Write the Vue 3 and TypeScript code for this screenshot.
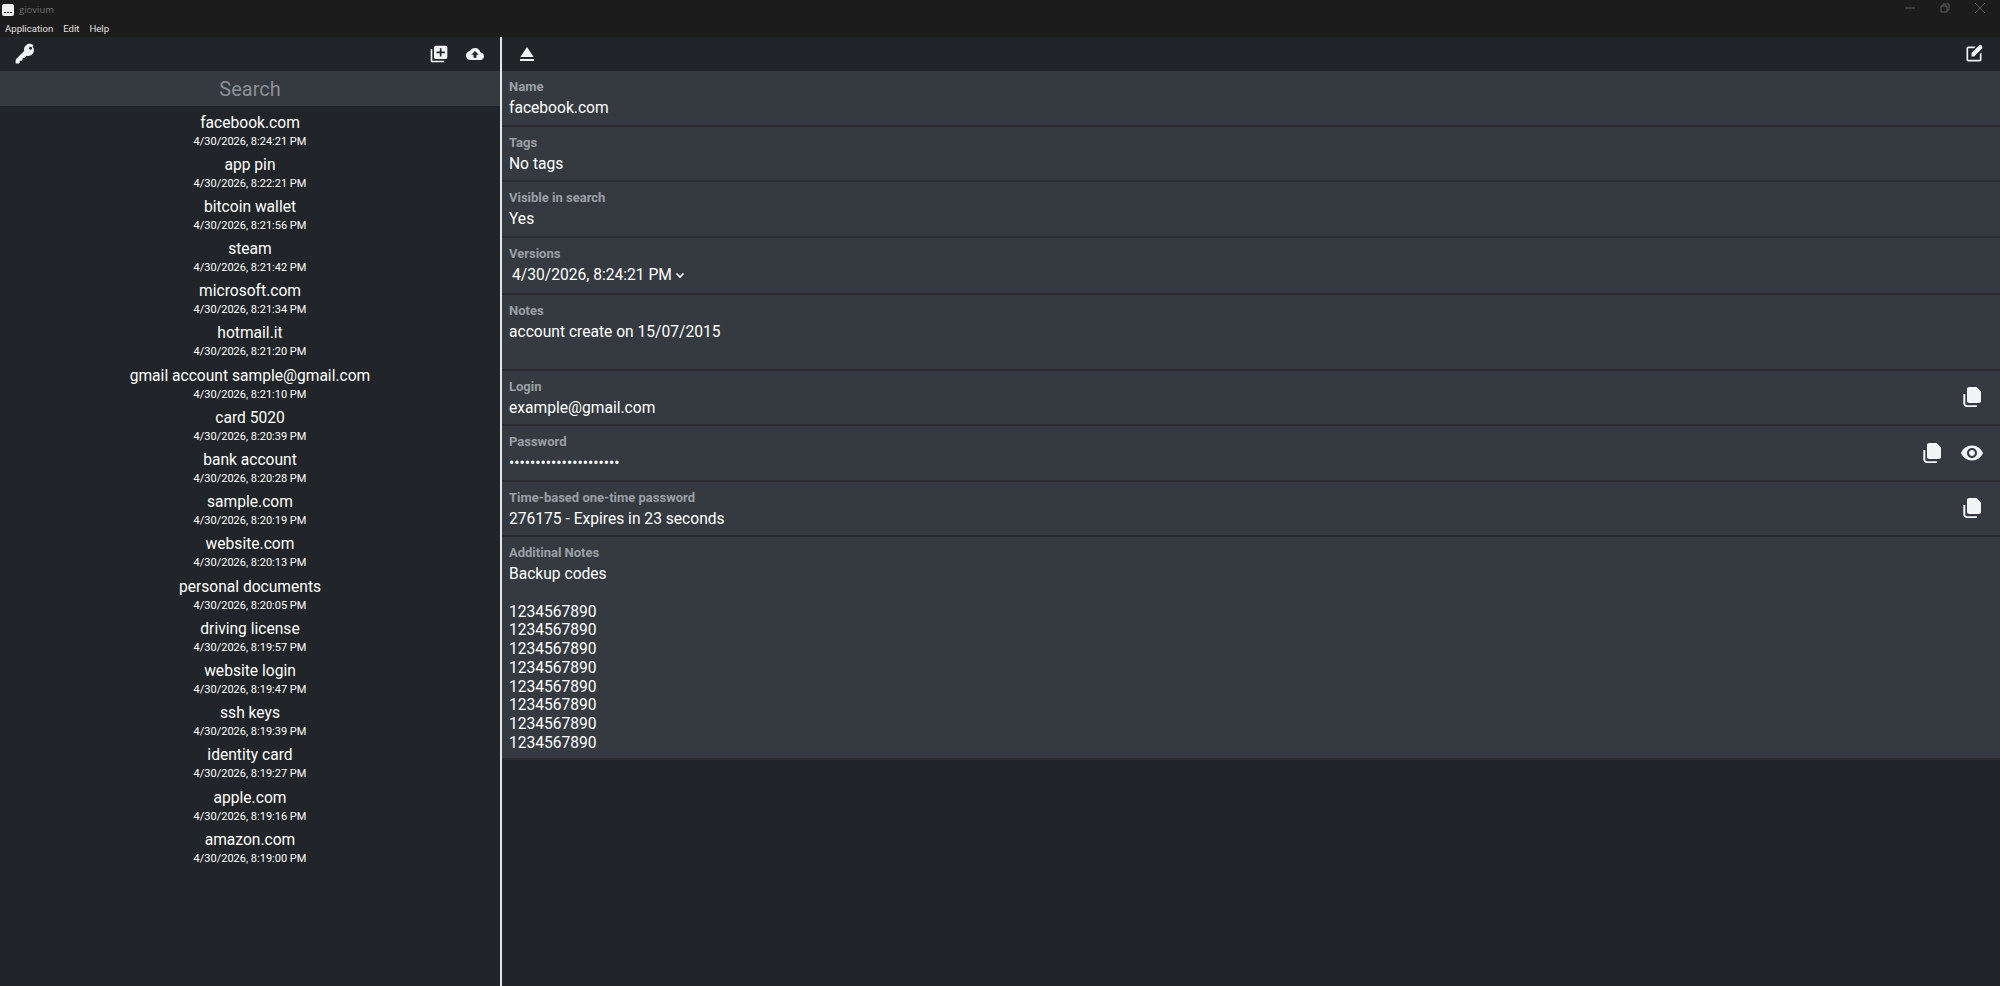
<script setup lang="ts">
interface Entry {
  name: string;
  date: string;
}

const entries: Entry[] = [
  { name: 'facebook.com', date: '4/30/2026, 8:24:21 PM' },
  { name: 'app pin', date: '4/30/2026, 8:22:21 PM' },
  { name: 'bitcoin wallet', date: '4/30/2026, 8:21:56 PM' },
  { name: 'steam', date: '4/30/2026, 8:21:42 PM' },
  { name: 'microsoft.com', date: '4/30/2026, 8:21:34 PM' },
  { name: 'hotmail.it', date: '4/30/2026, 8:21:20 PM' },
  { name: 'gmail account sample@gmail.com', date: '4/30/2026, 8:21:10 PM' },
  { name: 'card 5020', date: '4/30/2026, 8:20:39 PM' },
  { name: 'bank account', date: '4/30/2026, 8:20:28 PM' },
  { name: 'sample.com', date: '4/30/2026, 8:20:19 PM' },
  { name: 'website.com', date: '4/30/2026, 8:20:13 PM' },
  { name: 'personal documents', date: '4/30/2026, 8:20:05 PM' },
  { name: 'driving license', date: '4/30/2026, 8:19:57 PM' },
  { name: 'website login', date: '4/30/2026, 8:19:47 PM' },
  { name: 'ssh keys', date: '4/30/2026, 8:19:39 PM' },
  { name: 'identity card', date: '4/30/2026, 8:19:27 PM' },
  { name: 'apple.com', date: '4/30/2026, 8:19:16 PM' },
  { name: 'amazon.com', date: '4/30/2026, 8:19:00 PM' },
];

const backupCodes = 'Backup codes\n\n' + Array(8).fill('1234567890').join('\n');
const copyPath =
  'M9 2h7.5L21 6.5V16c0 1.1-.9 2-2 2H9c-1.1 0-2-.9-2-2V4c0-1.1.9-2 2-2zM3.3 9h2v9.5c0 1 .7 1.7 1.7 1.7h10V22H7c-2 0-3.7-1.6-3.7-3.5z';
</script>

<template>
  <div class="app">
    <header class="titlebar">
      <span class="logo"><i></i><i></i><i></i></span>
      <span class="title">giovium</span>
      <div class="window-controls">
        <svg viewBox="0 0 10 10"><path d="M0 5h10" /></svg>
        <svg viewBox="0 0 10 10"><path d="M1 3h6v6H1zM3 3V1h6v6H7" /></svg>
        <svg viewBox="0 0 10 10"><path d="M0 0l10 10M10 0L0 10" /></svg>
      </div>
    </header>
    <nav class="menubar">
      <span>Application</span>
      <span>Edit</span>
      <span>Help</span>
    </nav>

    <main class="panes">
      <aside class="sidebar">
        <div class="toolbar">
          <svg class="icon" viewBox="0 0 24 24">
            <path
              d="M20.6 3.4c-2.2-2.2-5.8-2.2-8 0-1.5 1.5-2 3.7-1.4 5.6L3.6 16.6c-.6.6-1 1.5-1 2.4v2.4h3.2l1-1v-1.6h1.7l1.2-1.2v-1.7h1.7l2.2-2.2c1.9.6 4.1.1 5.6-1.4 2.3-2.2 2.3-5.7.4-7.9zm-2 3.9c-.6.6-1.5.6-2.1 0-.6-.6-.6-1.5 0-2.1.6-.6 1.5-.6 2.1 0 .6.6.6 1.5 0 2.1z"
            />
          </svg>
          <span class="spacer"></span>
          <svg class="icon icon-sm" viewBox="0 0 24 24">
            <path
              d="M4 6H2v14c0 1.1.9 2 2 2h14v-2H4V6zm16-4H8c-1.1 0-2 .9-2 2v12c0 1.1.9 2 2 2h12c1.1 0 2-.9 2-2V4c0-1.1-.9-2-2-2zm-1 9h-4v4h-2v-4H9V9h4V5h2v4h4v2z"
            />
          </svg>
          <svg class="icon icon-xs" viewBox="0 0 24 24">
            <path
              d="M19.35 10.04C18.67 6.59 15.64 4 12 4 9.11 4 6.6 5.64 5.35 8.04 2.34 8.36 0 10.91 0 14c0 3.31 2.69 6 6 6h13c2.76 0 5-2.24 5-5 0-2.64-2.05-4.78-4.65-4.96zM14 13v4h-4v-4H7l5-5 5 5h-3z"
            />
          </svg>
        </div>
        <input class="search" type="text" placeholder="Search" />
        <ul class="entry-list">
          <li v-for="entry in entries" :key="entry.date">
            <div class="entry-name">{{ entry.name }}</div>
            <div class="entry-date">{{ entry.date }}</div>
          </li>
        </ul>
      </aside>

      <section class="detail">
        <div class="toolbar">
          <svg class="icon" viewBox="0 0 24 24"><path d="M5 17h14v2H5zm7-12L5.33 15h13.34z" /></svg>
          <span class="spacer"></span>
          <svg class="icon icon-sm" viewBox="0 0 24 24">
            <path
              d="M5 21q-.825 0-1.412-.587Q3 19.825 3 19V5q0-.825.588-1.413Q4.175 3 5 3h8.925l-2 2H5v14h14v-6.95l2-2V19q0 .825-.587 1.413Q19.825 21 19 21Zm4-6v-4.25l9.175-9.175q.3-.3.675-.45.375-.15.75-.15.4 0 .763.15.362.15.662.425L21.425 3q.275.3.425.662.15.363.15.738t-.137.737q-.138.363-.438.663L12.25 15Z"
            />
          </svg>
        </div>

        <div class="field">
          <div class="field-body">
            <label>Name</label>
            <div class="value">facebook.com</div>
          </div>
        </div>
        <div class="field">
          <div class="field-body">
            <label>Tags</label>
            <div class="value">No tags</div>
          </div>
        </div>
        <div class="field">
          <div class="field-body">
            <label>Visible in search</label>
            <div class="value">Yes</div>
          </div>
        </div>
        <div class="field field-versions">
          <div class="field-body">
            <label>Versions</label>
            <div class="value version-select">
              4/30/2026, 8:24:21 PM
              <svg viewBox="0 0 10 10"><path d="M1.5 3.5L5 7l3.5-3.5" /></svg>
            </div>
          </div>
        </div>
        <div class="field field-notes">
          <div class="field-body">
            <label>Notes</label>
            <div class="value">account create on 15/07/2015</div>
          </div>
        </div>
        <div class="field">
          <div class="field-body">
            <label>Login</label>
            <div class="value">example@gmail.com</div>
          </div>
          <svg class="icon" viewBox="0 0 24 24"><path :d="copyPath" /></svg>
        </div>
        <div class="field">
          <div class="field-body">
            <label>Password</label>
            <div class="value">•••••••••••••••••••••</div>
          </div>
          <svg class="icon" viewBox="0 0 24 24"><path :d="copyPath" /></svg>
          <svg class="icon" viewBox="0 0 24 24">
            <path
              d="M12 4.5C7 4.5 2.73 7.61 1 12c1.73 4.39 6 7.5 11 7.5s9.27-3.11 11-7.5c-1.73-4.39-6-7.5-11-7.5zM12 17c-2.76 0-5-2.24-5-5s2.24-5 5-5 5 2.24 5 5-2.24 5-5 5zm0-8c-1.66 0-3 1.34-3 3s1.34 3 3 3 3-1.34 3-3-1.34-3-3-3z"
            />
          </svg>
        </div>
        <div class="field">
          <div class="field-body">
            <label>Time-based one-time password</label>
            <div class="value">276175 - Expires in 23 seconds</div>
          </div>
          <svg class="icon" viewBox="0 0 24 24"><path :d="copyPath" /></svg>
        </div>
        <div class="field field-long">
          <div class="field-body">
            <label>Additinal Notes</label>
            <div class="value multiline">{{ backupCodes }}</div>
          </div>
        </div>
      </section>
    </main>
  </div>
</template>

<style>
html,
body {
  margin: 0;
  background: #212529;
}
</style>

<style scoped>
.app {
  width: 2000px;
  height: 986px;
  display: flex;
  flex-direction: column;
  overflow: hidden;
  background: #212529;
  color: #fff;
  font-family: Roboto, "Liberation Sans", sans-serif;
}

.titlebar {
  height: 19px;
  display: flex;
  align-items: center;
  background: #1c1c1c;
  padding-left: 2px;
}
.logo {
  width: 12px;
  height: 12px;
  background: #eee;
  border-radius: 2px;
  display: flex;
  align-items: flex-end;
  justify-content: center;
  gap: 1px;
  padding-bottom: 3px;
  box-sizing: border-box;
}
.logo i {
  width: 2px;
  height: 1px;
  background: #333;
}
.title {
  margin-left: 5px;
  font-family: "Open Sans", sans-serif;
  font-size: 9.5px;
  color: #6f6f6f;
}
.window-controls {
  margin-left: auto;
  display: flex;
  gap: 25px;
  padding: 0 15px 3px 0;
}
.window-controls svg {
  width: 10px;
  height: 10px;
  fill: none;
  stroke: #5c5c5c;
  stroke-width: 1;
}

.menubar {
  height: 18px;
  display: flex;
  align-items: center;
  gap: 10px;
  padding-left: 5px;
  background: #1c1c1c;
  font-family: Roboto, sans-serif;
  font-size: 9.6px;
  color: #e0e0e0;
}

.panes {
  flex: 1;
  display: flex;
  min-height: 0;
}

.sidebar {
  width: 500px;
  flex: none;
  display: flex;
  flex-direction: column;
}

.toolbar {
  height: 34px;
  flex: none;
  display: flex;
  align-items: center;
  gap: 17px;
  padding: 0 16px 0 13px;
}
.spacer {
  flex: 1;
}
.icon {
  width: 24px;
  height: 24px;
  flex: none;
  fill: #f1f3f5;
}
.icon-sm {
  width: 20px;
  height: 20px;
}
.icon-xs {
  width: 18px;
  height: 18px;
}

.search {
  height: 35px;
  flex: none;
  box-sizing: border-box;
  border: 0;
  outline: 0;
  padding: 0;
  width: 100%;
  background: #343a40;
  color: #fff;
  font-family: inherit;
  font-size: 20px;
  text-align: center;
}
.search::placeholder {
  color: #8b9096;
  opacity: 1;
}

.entry-list {
  list-style: none;
  margin: 0;
  padding: 4.5px 0 0;
}
.entry-list li {
  height: 42.2px;
  text-align: center;
}
.entry-name {
  font-size: 15.6px;
  line-height: 24px;
}
.entry-date {
  font-size: 11px;
  line-height: 13px;
}

.detail {
  flex: 1;
  min-width: 0;
  display: flex;
  flex-direction: column;
  border-left: 2px solid #e4e6e8;
}

.field {
  display: flex;
  align-items: center;
  gap: 16px;
  height: 55.5px;
  box-sizing: border-box;
  padding: 0 16px 0 7px;
  background: #343a40;
  border-bottom: 2px solid #292d32;
}
.field-body {
  flex: 1;
  min-width: 0;
  align-self: flex-start;
  padding-top: 8px;
}
.field-versions {
  height: 57px;
}
.field-notes {
  height: 76px;
}
.field-long {
  height: 223px;
}
label {
  display: block;
  font-size: 13px;
  font-weight: 700;
  line-height: 15px;
  color: #9ba0a6;
  margin-bottom: 5px;
}
.value {
  font-size: 15.6px;
  line-height: 19px;
  color: #fff;
}
.multiline {
  white-space: pre-wrap;
  line-height: 18.75px;
}
.version-select {
  display: flex;
  align-items: center;
  gap: 3px;
  padding-left: 3px;
}
.version-select svg {
  width: 10px;
  height: 10px;
  fill: none;
  stroke: #fff;
  stroke-width: 1.6;
}
</style>
